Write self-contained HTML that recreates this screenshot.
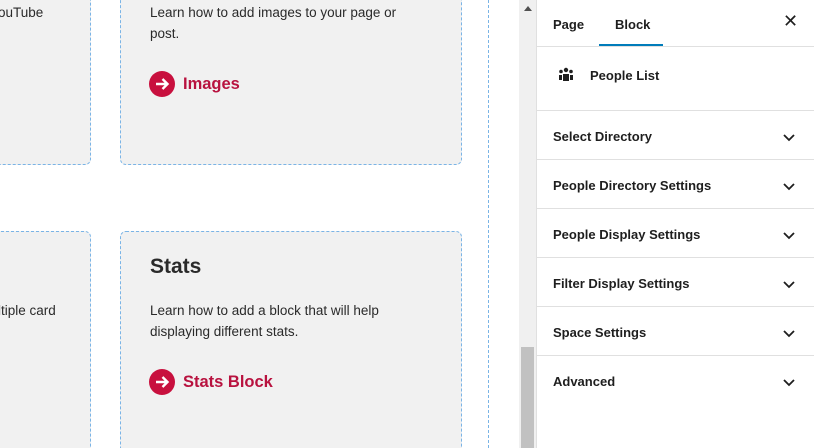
<!DOCTYPE html>
<html style="width:814px;height:448px;overflow:hidden"><head><style>
*{margin:0;padding:0;box-sizing:border-box}
body{width:814px;height:448px;overflow:hidden;background:#fff;font-family:"Liberation Sans",sans-serif;position:relative;color:#1e1e1e}
.card{position:absolute;background:#f1f1f1;border:1px dashed #7ab4e6;border-radius:6px}
.p{position:absolute;font-size:13.5px;line-height:21px;color:#2a2a2a}
.lnk{position:absolute;font-size:16.5px;font-weight:bold;color:#b8123f;display:flex;align-items:center}
.lnk .c{width:26px;height:26px;border-radius:50%;background:#c8103e;margin-right:8px;display:flex;align-items:center;justify-content:center}
.side{position:absolute;left:536px;top:0;width:278px;height:448px;border-left:1px solid #e0e0e0;background:#fff}
.row{position:absolute;left:0;width:278px;height:49px;border-top:1px solid #e0e0e0;font-size:13px;font-weight:bold;color:#1e1e1e}
.row span{position:absolute;left:16px;top:18px}
.row svg{position:absolute;left:246px;top:23px}
</style></head><body>
<div class="card" style="left:-20px;top:-10px;width:111px;height:175px"></div>
<div class="card" style="left:-20px;top:231px;width:111px;height:230px"></div>
<div class="card" style="left:120px;top:-10px;width:342px;height:175px"></div>
<div class="card" style="left:120px;top:231px;width:342px;height:230px"></div>
<div style="position:absolute;left:488px;top:0;height:448px;border-left:1px dashed #7ab4e6"></div>
<div class="p" style="left:-2px;top:2px">ouTube</div>
<div class="p" style="left:-2px;top:300px">ltiple card</div>
<div class="p" style="left:150px;top:2px">Learn how to add images to your page or<br>post.</div>
<div class="lnk" style="left:149px;top:71px"><div class="c"><svg width="16" height="16" viewBox="0 0 16 16"><path d="M2 8h11M8.5 3l5 5-5 5" stroke="#fff" stroke-width="2.4" fill="none"/></svg></div>Images</div>
<div style="position:absolute;left:150px;top:255px;font-size:21px;font-weight:bold;color:#2a2a2a">Stats</div>
<div class="p" style="left:150px;top:300px">Learn how to add a block that will help<br>displaying different stats.</div>
<div class="lnk" style="left:149px;top:369px"><div class="c"><svg width="16" height="16" viewBox="0 0 16 16"><path d="M2 8h11M8.5 3l5 5-5 5" stroke="#fff" stroke-width="2.4" fill="none"/></svg></div>Stats Block</div>
<div style="position:absolute;left:519px;top:0;width:17px;height:448px;background:#f0f0f0"></div>
<div style="position:absolute;left:524px;top:6px;width:0;height:0;border-left:4px solid transparent;border-right:4px solid transparent;border-bottom:5px solid #505050"></div>
<div style="position:absolute;left:521px;top:347px;width:13px;height:101px;background:#c1c1c1"></div>
<div class="side">
<div style="position:absolute;left:16px;top:17px;font-size:13px;font-weight:bold">Page</div>
<div style="position:absolute;left:78px;top:17px;font-size:13px;font-weight:bold">Block</div>
<div style="position:absolute;left:62px;top:44px;width:64px;height:3px;background:#007cba"></div>
<div style="position:absolute;left:246px;top:11px;font-size:18px">✕</div>
<div style="position:absolute;left:0;top:46px;width:278px;border-top:1px solid #e0e0e0"></div>
<svg style="position:absolute;left:21px;top:67px" width="16" height="16" viewBox="0 0 16 16"><circle cx="8" cy="3" r="2.2" fill="#1e1e1e"/><circle cx="3" cy="4.5" r="1.8" fill="#1e1e1e"/><circle cx="13" cy="4.5" r="1.8" fill="#1e1e1e"/><path d="M5 7h6v7H5zM1 8h3v5H1zM12 8h3v5h-3z" fill="#1e1e1e"/></svg>
<div style="position:absolute;left:53px;top:68px;font-size:13px;font-weight:bold">People List</div>
<div class="row" style="top:110px"><span>Select Directory</span><svg width="12" height="8"><path d="M1 1l5 5 5-5" stroke="#1e1e1e" stroke-width="1.8" fill="none"/></svg></div>
<div class="row" style="top:159px"><span>People Directory Settings</span><svg width="12" height="8"><path d="M1 1l5 5 5-5" stroke="#1e1e1e" stroke-width="1.8" fill="none"/></svg></div>
<div class="row" style="top:208px"><span>People Display Settings</span><svg width="12" height="8"><path d="M1 1l5 5 5-5" stroke="#1e1e1e" stroke-width="1.8" fill="none"/></svg></div>
<div class="row" style="top:257px"><span>Filter Display Settings</span><svg width="12" height="8"><path d="M1 1l5 5 5-5" stroke="#1e1e1e" stroke-width="1.8" fill="none"/></svg></div>
<div class="row" style="top:306px"><span>Space Settings</span><svg width="12" height="8"><path d="M1 1l5 5 5-5" stroke="#1e1e1e" stroke-width="1.8" fill="none"/></svg></div>
<div class="row" style="top:355px"><span>Advanced</span><svg width="12" height="8"><path d="M1 1l5 5 5-5" stroke="#1e1e1e" stroke-width="1.8" fill="none"/></svg></div>
</div>
</body></html>
